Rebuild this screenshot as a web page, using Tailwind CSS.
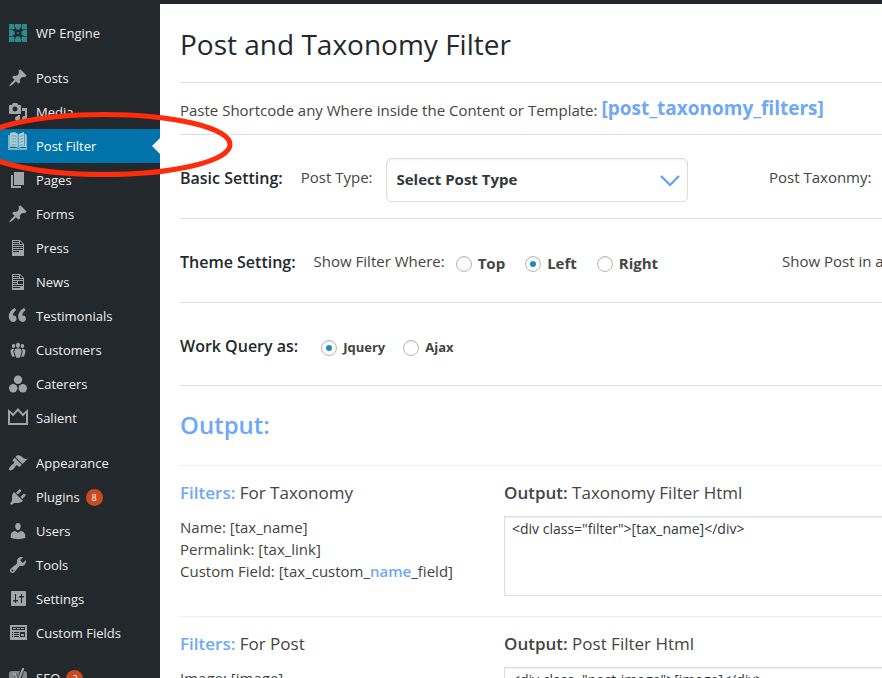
<!DOCTYPE html>
<html lang="en">
<head>
<meta charset="utf-8">
<meta name="viewport" content="width=device-width, initial-scale=1">
<title>Post and Taxonomy Filter</title>
<script src="https://cdn.jsdelivr.net/npm/@tailwindcss/browser@4"></script>
</head>
<body class="relative flex h-screen overflow-hidden border-t-4 border-[#23282d] bg-white font-['Open_Sans','Noto_Sans',sans-serif] text-[#444]">

<nav aria-label="Admin menu" class="w-40 shrink-0 bg-[#23282d] pt-3 text-[13px] leading-[18px] text-[#eee]">
  <ul class="[&_a]:flex [&_a]:h-[34px] [&_a]:items-center [&_a]:gap-2 [&_a]:pl-2 [&_svg]:size-5 [&_svg]:shrink-0 [&_svg]:fill-[#a0a5aa]">
    <li><a href="#"><svg viewBox="0 0 20 20" aria-hidden="true"><g fill="#2b8a8c"><path d="M1 1h4.500l1 1v3.500l-1 1H1zM7 1h6v3l-1.500 2.500h-3L7 4zM14.500 1H19v5.500h-4.500l-1-1V2zM1 7h3l2.500 1.500v3L4 13H1zM19 7h-3l-2.500 1.500v3L16 13h3zM1 13.500h4.500l1 1V18l-1 1H1zM7 19h6v-3l-1.500-2.500h-3L7 16zM14.500 13.500H19V19h-4.500l-1-1v-3.500z"/><circle cx="10" cy="10" r="1"/></g></svg>WP Engine</a></li>
    <li class="pt-[11px]"><a href="#"><svg viewBox="0 0 20 20" aria-hidden="true"><path d="M10.440 3.020l1.820-1.820 6.360 6.350-1.830 1.820c-1.050-.680-2.480-.570-3.410.360l-.750.750c-.920.930-1.040 2.350-.350 3.410l-1.830 1.820-2.410-2.410-2.800 2.790c-.420.420-3.380 2.710-3.800 2.290s1.860-3.390 2.280-3.810l2.790-2.790L4.100 9.360l1.830-1.820c1.050.690 2.480.570 3.400-.360l.750-.750c.930-.920 1.050-2.350.360-3.410z"/></svg>Posts</a></li>
    <li><a href="#"><svg viewBox="0 0 20 20" aria-hidden="true"><path fill-rule="evenodd" d="M13 11V4c0-.55-.45-1-1-1h-1.670L9 1H5L3.670 3H2c-.55 0-1 .45-1 1v7c0 .55.45 1 1 1h10c.55 0 1-.45 1-1zM7 4.500c1.380 0 2.500 1.120 2.500 2.500S8.380 9.500 7 9.500 4.500 8.380 4.500 7 5.620 4.500 7 4.500zM14 6h5v10.500c0 1.380-1.120 2.500-2.500 2.500S14 17.880 14 16.500s1.120-2.500 2.500-2.500c.17 0 .34.02.5.05V9h-3V6zm-4 8.050V13h2v3.500c0 1.380-1.120 2.500-2.500 2.500S7 17.880 7 16.500 8.120 14 9.500 14c.17 0 .34.02.5.05z"/></svg>Media</a></li>
    <li><a href="#" aria-current="page" class="relative bg-[#0073aa] text-white"><svg viewBox="0 0 20 20" aria-hidden="true" class="mb-[10px]"><path fill="#7fb3c4" d="M0 4h2v13h7l1 1 1-1h7V4h1v15H0z"/><path fill="#a9cdd6" d="M2 2c3-1 6-1 8 1v14c-2-1.500-5-1.500-8-1zM10.500 3L16 1v14l-5.500 2z"/><path fill="#a9cdd6" d="M16.500 3H18v13h-4l2.500-1z"/><path fill="none" stroke="#5f9bb0" stroke-width=".8" d="M3.500 5c2-.5 4-.3 5 .3M3.500 8c2-.5 4-.3 5 .3M3.500 11c2-.5 4-.3 5 .3M3.500 14c2-.5 4-.3 5 .3M12 5.500L15 4.300M12 8.500l3-1.200M12 11.500l3-1.200M12 14.500l3-1.200M10.200 3v14M16.500 2v13"/></svg>Post Filter<span class="absolute right-0 top-[9px] border-y-8 border-r-8 border-y-transparent border-r-[#f1f1f1]"></span></a></li>
    <li><a href="#"><svg viewBox="0 0 20 20" aria-hidden="true"><path d="M6 15V2h10v13H6zm-1 1h8v2H3V5h2v11z"/></svg>Pages</a></li>
    <li><a href="#"><svg viewBox="0 0 20 20" aria-hidden="true"><path d="M10.440 3.020l1.820-1.820 6.360 6.350-1.830 1.820c-1.050-.680-2.480-.570-3.410.360l-.750.750c-.920.930-1.040 2.350-.350 3.410l-1.830 1.820-2.410-2.410-2.800 2.790c-.420.420-3.380 2.710-3.800 2.290s1.860-3.390 2.280-3.810l2.790-2.790L4.100 9.360l1.830-1.820c1.050.690 2.480.570 3.400-.360l.750-.750c.930-.920 1.050-2.350.360-3.410z"/></svg>Forms</a></li>
    <li><a href="#"><svg viewBox="0 0 20 20" aria-hidden="true"><path fill-rule="evenodd" d="M12 2l4 4v12H4V2h8zM5 3v1h6V3H5zm7 3h3l-3-3v3zM5 5v1h6V5H5zm10 3V7H5v1h10zm0 2V9H5v1h10zm0 2v-1H5v1h10zm-4 2v-1H5v1h6z"/></svg>Press</a></li>
    <li><a href="#"><svg viewBox="0 0 20 20" aria-hidden="true"><path fill-rule="evenodd" d="M12 2l4 4v12H4V2h8zM5 3v1h6V3H5zm7 3h3l-3-3v3zM5 5v1h6V5H5zm10 3V7H5v1h10zM5 9v1h4V9H5zm10 3V9h-5v3h5zM5 11v1h4v-1H5zm10 3v-1H5v1h10zm-3 2v-1H5v1h7z"/></svg>News</a></li>
    <li><a href="#"><svg viewBox="0 0 20 20" aria-hidden="true"><path d="M8.540 12.740c0-.87-.24-1.610-.72-2.220-.73-.92-2.140-1.030-2.960-.85-.34-1.930 1.300-4.390 3.420-5.450L6.650 1.940C3.450 3.460.31 6.960.85 11.370 1.190 14.160 2.800 16 5.080 16c1 0 1.830-.29 2.480-.88.66-.59.98-1.380.98-2.380zm9.430 0c0-.87-.24-1.610-.72-2.220-.73-.92-2.140-1.030-2.960-.85-.34-1.930 1.300-4.390 3.420-5.450l-1.630-2.280c-3.200 1.520-6.340 5.020-5.800 9.430.34 2.790 1.950 4.630 4.230 4.630 1 0 1.830-.29 2.480-.88.66-.59.98-1.380.98-2.380z"/></svg>Testimonials</a></li>
    <li><a href="#"><svg viewBox="0 0 20 20" aria-hidden="true"><path d="M8.030 4.460c-.29 1.280.55 3.460 1.970 3.460 1.410 0 2.250-2.180 1.960-3.460-.22-.98-1.080-1.630-1.960-1.630-.89 0-1.740.65-1.970 1.630zm-4.130.9c-.25 1.080.47 2.930 1.670 2.930s1.920-1.850 1.670-2.930c-.19-.83-.92-1.390-1.670-1.390s-1.480.56-1.670 1.390zm8.860 0c-.25 1.080.47 2.930 1.660 2.930 1.200 0 1.920-1.850 1.670-2.930-.19-.83-.92-1.390-1.670-1.390-.74 0-1.470.56-1.660 1.390zm-.59 11.430l1.250-4.300C14.200 10 12.710 8.470 10 8.470c-2.720 0-4.210 1.530-3.440 4.020l1.260 4.300C8.050 17.510 9 18 10 18c.98 0 1.940-.49 2.170-1.210zm-6.100-7.630c-.49.67-.96 1.830-.42 3.590l1.120 3.790c-.34.2-.77.31-1.200.31-.85 0-1.650-.41-1.850-1.030l-1.070-3.650c-.65-2.110.61-3.400 2.920-3.400.27 0 .54.02.79.06-.1.1-.2.22-.29.33zm8.350-.39c2.310 0 3.580 1.290 2.920 3.400l-1.070 3.650c-.2.62-1 1.030-1.850 1.030-.43 0-.86-.11-1.200-.31l1.110-3.770c.55-1.780.08-2.940-.42-3.610-.08-.11-.18-.23-.28-.33.25-.04.51-.06.79-.06z"/></svg>Customers</a></li>
    <li><a href="#"><svg viewBox="0 0 20 20" aria-hidden="true"><circle cx="10" cy="5.700" r="4.200"/><circle cx="5.200" cy="14.200" r="4.200"/><circle cx="14.800" cy="14.200" r="4.200"/></svg>Caterers</a></li>
    <li><a href="#"><svg viewBox="0 0 20 20" aria-hidden="true"><path fill-rule="evenodd" d="M0 1l5 4.500L10 0l5 5.500L20 1v16H0zM2 5v10h16V5l-3 3.500L10 3 5 8.500z"/></svg>Salient</a></li>
    <li class="pt-[11px]"><a href="#"><svg viewBox="0 0 20 20" aria-hidden="true"><path d="M14.480 11.060L7.410 3.990l1.500-1.500c.5-.56 2.300-.47 3.510.32 1.210.8 1.430 1.280 2.910 2.100 1.180.64 2.450 1.260 4.450.85zm-.71.71L6.700 4.700 4.930 6.470c-.39.39-.39 1.020 0 1.410l1.060 1.060c.39.39.39 1.030 0 1.420-.6.6-1.430 1.110-2.210 1.690-.35.26-.7.53-1.010.84C1.430 14.230.4 16.080 1.400 17.070c.99 1 2.840-.03 4.180-1.360.31-.31.58-.66.85-1.020.57-.78 1.080-1.610 1.690-2.210.39-.39 1.020-.39 1.410 0l1.060 1.060c.39.39 1.020.39 1.410 0z"/></svg>Appearance</a></li>
    <li><a href="#"><svg viewBox="0 0 20 20" aria-hidden="true"><path d="M13.110 4.360L9.870 7.600 8 5.730l3.240-3.240c.35-.34 1.050-.2 1.560.32.52.51.66 1.210.31 1.550zm-8 1.770l.91-1.120 9.010 9.010-1.190.84c-.71.71-2.630 1.160-3.820 1.160H6.140L4.900 17.260c-.59.59-1.540.59-2.120 0-.59-.58-.59-1.530 0-2.120l1.240-1.240v-3.880c0-1.130.4-3.190 1.090-3.890zm7.260 3.970l3.240-3.240c.34-.35 1.040-.21 1.550.31.52.51.66 1.210.31 1.550l-3.240 3.250z"/></svg><span class="flex items-center gap-[6px]">Plugins <span class="size-[17px] rounded-full bg-[#ca4a1f] text-center text-[9px] leading-[17px] text-white">8</span></span></a></li>
    <li><a href="#"><svg viewBox="0 0 20 20" aria-hidden="true"><path d="M10 9.250c-2.270 0-2.730-3.440-2.730-3.440C7 4.020 7.820 2 9.970 2c2.160 0 2.980 2.020 2.710 3.810 0 0-.41 3.440-2.680 3.440zm0 2.570L12.720 10c2.390 0 4.520 2.330 4.520 4.530v2.490s-3.650 1.130-7.240 1.130c-3.650 0-7.240-1.130-7.240-1.130v-2.490c0-2.250 1.940-4.480 4.470-4.480z"/></svg>Users</a></li>
    <li><a href="#"><svg viewBox="0 0 20 20" aria-hidden="true"><path fill-rule="evenodd" d="M16.680 9.770c-1.340 1.340-3.300 1.670-4.950.99l-5.410 6.520c-.99.99-2.590.99-3.580 0s-.99-2.590 0-3.570l6.520-5.420c-.68-1.650-.35-3.610.99-4.950 1.280-1.280 3.120-1.620 4.720-1.060l-2.890 2.890 2.820 2.820 2.860-2.870c.53 1.580.18 3.390-1.080 4.650zM3.810 16.210c.4.39 1.040.39 1.430 0 .4-.4.4-1.040 0-1.430-.39-.4-1.030-.4-1.430 0-.39.39-.39 1.030 0 1.430z"/></svg>Tools</a></li>
    <li><a href="#"><svg viewBox="0 0 20 20" aria-hidden="true"><path fill-rule="evenodd" d="M18 16V3c0-.55-.45-1-1-1H4c-.55 0-1 .45-1 1v13c0 .55.45 1 1 1h13c.55 0 1-.45 1-1zM8 11h1.500c.6 0 .6 1.500 0 1.500H8V14H7v-1.500H5.500c-.6 0-.6-1.500 0-1.500H7V5h1v6zm6-4h1.500c.6 0 .6 1.500 0 1.500H14V14h-1V8.500h-1.500c-.6 0-.6-1.500 0-1.500H13V5h1v2z"/></svg>Settings</a></li>
    <li><a href="#"><svg viewBox="0 0 20 20" aria-hidden="true"><path fill-rule="evenodd" d="M2 2h17v15H2zM4 4v3h13V4zM5 5h3v1H5zM9 5h3v1H9zM13 5h3v1h-3zM4 9h1v1H4zM6 9h5v1H6zM4 11h1v1H4zM6 11h5v1H6zM4 13h1v1H4zM6 13h5v1H6zM12 9h5v5h-5zM13 11h3v2h-3z"/></svg>Custom Fields</a></li>
    <li class="pt-[11px]"><a href="#"><svg viewBox="0 0 20 20" aria-hidden="true"><path fill="#82878c" d="M4 3h8l-2 6-2-4H5l4 9-2 4H1V6c0-2 1-3 3-3zM16 3c2 0 3 1 3 3v12h-8z"/><path fill="none" stroke="#a0a5aa" stroke-width="2" d="M5 6h2l3 7 5-12h1"/></svg><span class="flex items-center gap-[6px]">SEO <span class="size-[17px] rounded-full bg-[#ca4a1f] text-center text-[9px] leading-[17px] text-white">2</span></span></a></li>
  </ul>
</nav>

<main class="min-w-0 flex-1 overflow-hidden pl-5">
  <h1 class="border-b border-[#ddd] pt-5 pb-[18px] text-[28px] leading-10 text-[#23282d]">Post and Taxonomy Filter</h1>

  <p class="flex h-[52px] items-center gap-1 border-b border-[#ddd] pt-[3px] text-[15px] whitespace-nowrap">Paste Shortcode any Where inside the Content or Template: <strong class="pb-1 text-[19px] font-bold text-[#6ea8f7]">[post_taxonomy_filters]</strong></p>

  <form>
    <section class="flex h-[84px] items-center border-b border-[#ddd] pt-[6px] text-[15px] whitespace-nowrap">
      <div class="flex w-[589px] shrink-0 items-center">
        <h2 class="mr-[18px] pb-1 text-base font-semibold text-[#23282d]">Basic Setting:</h2>
        <label for="post-type" class="mr-[13px] pb-1">Post Type:</label>
        <div class="relative w-[302px]">
          <select id="post-type" class="h-11 w-full appearance-none rounded-[5px] border border-[#ddd] bg-white pl-[10px] text-[15px] font-bold text-[#32373c] shadow-[inset_0_1px_2px_rgba(0,0,0,0.07)]"><option>Select Post Type</option></select>
          <svg viewBox="0 0 20 12" aria-hidden="true" class="pointer-events-none absolute top-[17px] right-2 h-3 w-5 fill-none stroke-[#5b9df5] stroke-2"><path d="M1 1l9 9 9-9"/></svg>
        </div>
      </div>
      <span class="pb-1">Post Taxonmy:</span>
    </section>

    <section class="flex h-[84px] items-center border-b border-[#ddd] pt-[6px] text-[15px] whitespace-nowrap">
      <div class="flex w-[602px] shrink-0 items-center">
        <h2 class="mr-[18px] pb-1 text-base font-semibold text-[#23282d]">Theme Setting:</h2>
        <span id="where" class="mr-[11px] pb-1">Show Filter Where:</span>
        <div role="radiogroup" aria-labelledby="where" class="flex gap-5 font-bold [&_label]:flex [&_label]:items-center [&_label]:gap-[6px]">
          <label><input type="radio" name="where" class="flex size-4 appearance-none items-center justify-center rounded-full border border-[#b4b9be] bg-white shadow-[inset_0_1px_2px_rgba(0,0,0,0.1)] checked:before:size-[6px] checked:before:rounded-full checked:before:bg-[#1e8cbe]">Top</label>
          <label><input type="radio" name="where" checked class="flex size-4 appearance-none items-center justify-center rounded-full border border-[#b4b9be] bg-white shadow-[inset_0_1px_2px_rgba(0,0,0,0.1)] checked:before:size-[6px] checked:before:rounded-full checked:before:bg-[#1e8cbe]">Left</label>
          <label><input type="radio" name="where" class="flex size-4 appearance-none items-center justify-center rounded-full border border-[#b4b9be] bg-white shadow-[inset_0_1px_2px_rgba(0,0,0,0.1)] checked:before:size-[6px] checked:before:rounded-full checked:before:bg-[#1e8cbe]">Right</label>
        </div>
      </div>
      <span class="pb-1">Show Post in a Row:</span>
    </section>

    <section class="flex h-[83px] items-center border-b border-[#ddd] pt-[7px] text-[15px] whitespace-nowrap">
      <h2 id="query" class="mr-[23px] pb-1 text-base font-semibold text-[#23282d]">Work Query as:</h2>
      <div role="radiogroup" aria-labelledby="query" class="flex gap-[18px] text-[13px] font-bold [&_label]:flex [&_label]:items-center [&_label]:gap-[6px]">
        <label><input type="radio" name="query" checked class="flex size-4 appearance-none items-center justify-center rounded-full border border-[#b4b9be] bg-white shadow-[inset_0_1px_2px_rgba(0,0,0,0.1)] checked:before:size-[6px] checked:before:rounded-full checked:before:bg-[#1e8cbe]">Jquery</label>
        <label><input type="radio" name="query" class="flex size-4 appearance-none items-center justify-center rounded-full border border-[#b4b9be] bg-white shadow-[inset_0_1px_2px_rgba(0,0,0,0.1)] checked:before:size-[6px] checked:before:rounded-full checked:before:bg-[#1e8cbe]">Ajax</label>
      </div>
    </section>

    <h2 class="flex h-20 items-center border-b border-[#eee] pb-[2px] text-2xl font-semibold text-[#6ea8f7]">Output:</h2>

    <section class="flex h-[151px] border-b border-[#eee] pt-[15px] whitespace-nowrap">
      <div class="w-[324px] shrink-0">
        <h3 class="text-[17px] leading-6"><b class="font-semibold text-[#6ea8f7]">Filters:</b> For Taxonomy</h3>
        <p class="mt-[11px] text-[15px] leading-[22px]">Name: [tax_name]<br>Permalink: [tax_link]<br>Custom Field: [tax_custom_<b class="font-semibold text-[#6ea8f7]">name</b>_field]</p>
      </div>
      <div class="-mr-5 flex-1">
        <label for="tax-html" class="block text-[17px] leading-6"><b class="font-semibold">Output:</b> Taxonomy Filter Html</label>
        <textarea id="tax-html" class="mt-[11px] block h-20 w-full resize-none border border-[#ddd] px-[7px] py-[2px] text-[14px] leading-5 text-[#32373c] shadow-[inset_0_1px_2px_rgba(0,0,0,0.07)]">&lt;div class="filter"&gt;[tax_name]&lt;/div&gt;</textarea>
      </div>
    </section>

    <section class="flex h-[151px] border-b border-[#eee] pt-[15px] whitespace-nowrap">
      <div class="w-[324px] shrink-0">
        <h3 class="text-[17px] leading-6"><b class="font-semibold text-[#6ea8f7]">Filters:</b> For Post</h3>
        <p class="mt-[11px] text-[15px] leading-[22px]">Image: [image]</p>
      </div>
      <div class="-mr-5 flex-1">
        <label for="post-html" class="block text-[17px] leading-6"><b class="font-semibold">Output:</b> Post Filter Html</label>
        <textarea id="post-html" class="mt-[11px] block h-20 w-full resize-none border border-[#ddd] px-[7px] py-[2px] text-[14px] leading-5 text-[#32373c] shadow-[inset_0_1px_2px_rgba(0,0,0,0.07)]">&lt;div class="post-image"&gt;[image]&lt;/div&gt;</textarea>
      </div>
    </section>
  </form>
</main>

<!-- Highlight ring around the Post Filter menu item -->
<svg viewBox="0 0 240 70" aria-hidden="true" class="pointer-events-none absolute top-[106px] left-0 h-[70px] w-60"><ellipse cx="104" cy="34.500" rx="126" ry="30" fill="none" stroke="#ff2b0d" stroke-width="5"/></svg>
</body>
</html>
